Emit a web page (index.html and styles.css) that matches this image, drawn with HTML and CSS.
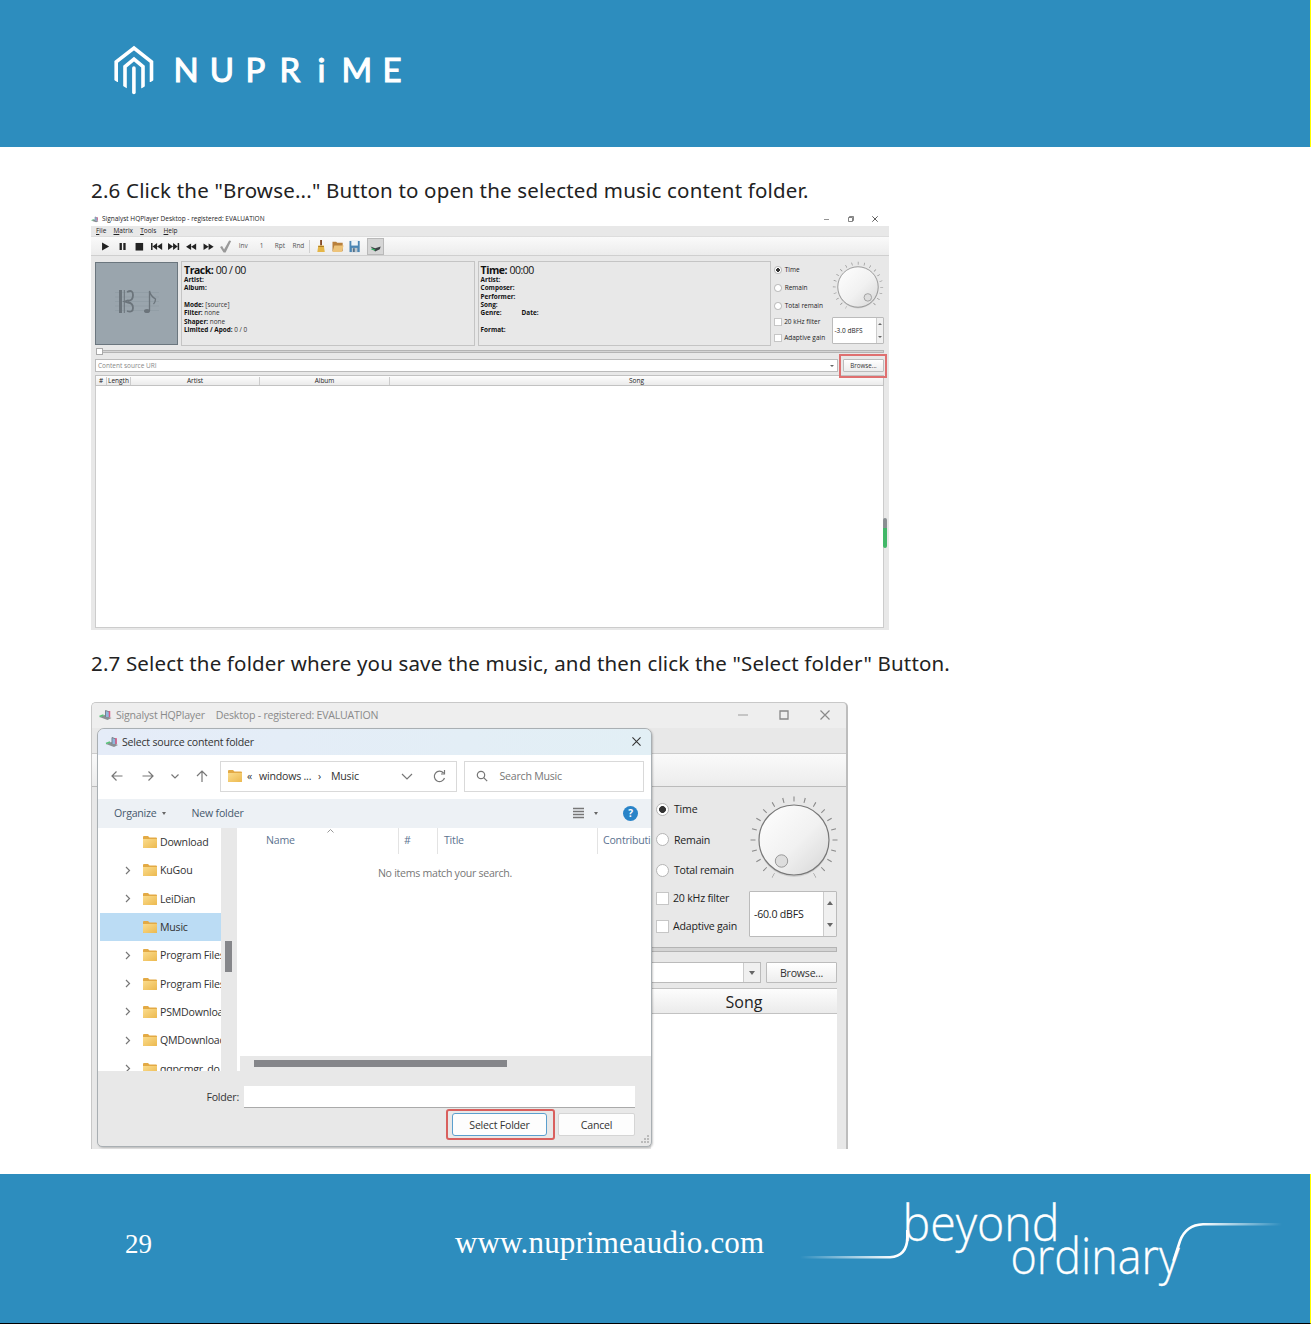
FILE: index.html
```html
<!DOCTYPE html>
<html lang="en">
<head>
    <meta charset="UTF-8">
    <meta name="viewport" content="width=device-width, initial-scale=1.0">
    <title>NuPrime - HQPlayer setup</title>
    <link rel="stylesheet" href="styles.css">
</head>
<body>
    <!-- shared icons -->
    <svg class="sprite" width="0" height="0">
        <defs>
            <linearGradient id="knob" x1="0" y1="0" x2="1" y2="1">
                <stop offset="0" stop-color="#fff"/>
                <stop offset="0.55" stop-color="#f1f1f1"/>
                <stop offset="1" stop-color="#d6d6d6"/>
            </linearGradient>
            <linearGradient id="gold" x1="0" y1="0" x2="1" y2="1">
                <stop offset="0" stop-color="#fbdc8c"/>
                <stop offset="1" stop-color="#ecb94f"/>
            </linearGradient>
        </defs>
        <symbol id="i-dial" viewBox="-45 -45 90 90">
            <path d="M-20.5 35.5A41 41 0 1 1 20.5 35.5" pathLength="20" fill="none" stroke="#8a8a8a" stroke-width="5" stroke-dasharray="0.1 0.9" stroke-dashoffset="0.05"/>
            <ellipse cx="0" cy="2" rx="35" ry="35" fill="#cfcfcf"/>
            <circle r="35" fill="url(#knob)" stroke="#777" stroke-width="1.2"/>
        </symbol>
        <symbol id="i-app" viewBox="0 0 14 12">
            <path d="M1 8l5-2 7 3-4 2z" fill="#8a8f94"/>
            <path d="M1 7.500l4-1.500" stroke="#58c478" stroke-width="1.500"/>
            <path d="M7 8V1.500l4 1.500v5" fill="#8fb7dc" stroke="#77808c"/>
            <path d="M11 2v6" stroke="#d85a86" stroke-width="1.500"/>
        </symbol>
        <symbol id="i-folder" viewBox="0 0 14 12">
            <path d="M0 1q0-1 1-1h4l1.500 1.500H13q1 0 1 1V11q0 1-1 1H1q-1 0-1-1z" fill="#e3aa45"/>
            <path d="M0 3h14v8q0 1-1 1H1q-1 0-1-1z" fill="url(#gold)"/>
        </symbol>
        <symbol id="i-chevron" viewBox="0 0 8 8">
            <path d="M2 .5L5.500 4 2 7.500" fill="none" stroke="#777" stroke-width="1.200"/>
        </symbol>
        <symbol id="i-close" viewBox="0 0 10 10">
            <path d="M.5 .5l9 9M9.500 .5l-9 9" fill="none" stroke="currentColor" stroke-width="1.200"/>
        </symbol>
    </svg>

    <header class="band top">
        <svg class="logo" width="300" height="60" viewBox="110 40 300 60">
            <g fill="none" stroke="#fff" stroke-width="3.600">
                <path d="M116.200 82V61.800L134 48l17.500 13.800V82"/>
                <path d="M125 88.500V66.500L134 59l9 7.500v22"/>
                <path d="M133.900 68V92.500" stroke-linecap="round"/>
            </g>
            <path d="M114 80l5 3v2h-5zM149 83l5-3v5h-5zM123 86l5 3v2h-5zM140.500 89l5-3v5h-5z" fill="#2d8dbe"/>
            <text class="wordmark" y="81.800" x="173.500 209.800 245.500 279.500 317.500 341.500 382.500">NUPRiME</text>
        </svg>
    </header>

    <main class="page">
        <p class="step step-a">2.6 Click the "Browse..." Button to open the selected music content folder.</p>

        <section class="player">
            <div class="titlebar">
                <svg width="8" height="7"><use href="#i-app"/></svg>
                <span class="name">Signalyst HQPlayer Desktop - registered: EVALUATION</span>
                <div class="winbtns">
                    <svg width="6" height="6"><path d="M0 3.500h5" stroke="#777" stroke-width=".8"/></svg>
                    <svg width="6" height="6"><path d="M.5 1.500h4v4h-4zM1.500 1.500v-1h4v4h-1" fill="none" stroke="#666" stroke-width=".8"/></svg>
                    <svg class="dark" width="6" height="6"><use href="#i-close"/></svg>
                </div>
            </div>
            <div class="menubar"><span><u>F</u>ile</span><span><u>M</u>atrix</span><span><u>T</u>ools</span><span><u>H</u>elp</span></div>
            <div class="toolbar">
                <svg viewBox="0 0 17 12"><path d="M5 2l7 4-7 4z"/></svg>
                <svg viewBox="0 0 17 12"><path d="M5.500 2.500h2.300v7H5.500zM9.200 2.500h2.300v7H9.200z"/></svg>
                <svg viewBox="0 0 17 12"><path d="M4.500 2.500h7.500v7.500H4.500z"/></svg>
                <svg viewBox="0 0 17 12"><path d="M3 2.500h1.500v7H3zM9 2.500v7L4.500 6zM14 2.500v7L9 6z"/></svg>
                <svg viewBox="0 0 17 12"><path d="M14 2.500h-1.500v7H14zM8 2.500v7L12.500 6zM3 2.500v7L8 6z"/></svg>
                <svg viewBox="0 0 17 12"><path d="M9 3v6.500L4 6.200zM14 3v6.500L9 6.200z"/></svg>
                <svg viewBox="0 0 17 12"><path d="M3.500 3v6.500l5-3.300zM8.500 3v6.500l5-3.300z"/></svg>
                <svg viewBox="0 0 17 12"><path d="M3 6.500L5 5.500l2 3.500 5-9 2 .5L8.500 12H6.500z" fill="#999"/></svg>
                <span>Inv</span><span>1</span><span>Rpt</span><span>Rnd</span>
                <i class="sep"></i>
                <svg viewBox="0 0 17 14"><path d="M8 0h2v6H8z" fill="#854b26"/><path d="M6 6h6l1 7H5z" fill="#e5b647"/><path d="M6 7h6" stroke="#a97822"/></svg>
                <svg viewBox="0 0 17 14"><path d="M3 2h4l1 1h6v9H3z" fill="#b9803c"/><path d="M5 6h10l-2 7H3z" fill="#edc37a"/></svg>
                <svg viewBox="0 0 17 14"><path d="M3 1h11v12H3z" fill="#4b86b4"/><path d="M5 1h7v5H5z" fill="#eef4f8"/><path d="M5.500 8.500h6V13h-6z" fill="#bcc6cd"/><path d="M7 9h1.500v4H7z" fill="#3a5c77"/></svg>
                <div class="pressed"><svg viewBox="0 0 17 14"><path d="M3 7l5 2 6-2-1 3-5 2.500z" fill="#3c4246"/><path d="M4 9.500l4 1.500" stroke="#39b566" stroke-width="1.500"/></svg></div>
            </div>
            <div class="deck">
                <div class="cover">
                    <svg width="83" height="83" viewBox="0 0 83 83">
                        <path d="M19 29.500h44M19 34h44M19 38.500h44M19 43h44M19 47.500h44" stroke="#8b979f" stroke-width=".5"/>
                        <g fill="none" stroke="#6b747b">
                            <path d="M24.500 27v23" stroke-width="3"/>
                            <path d="M28.300 27v23" stroke-width="1"/>
                            <path d="M31 29q6-3 6 3t-5 5.500l-3 1 3 1q5 .5 5 5.500t-6 3" stroke-width="1.800"/>
                            <path d="M53.500 48V28q1 5 6 8 0 3-2 5" stroke-width="1.300"/>
                        </g>
                        <ellipse cx="51" cy="48" rx="3" ry="2" fill="#6b747b"/>
                    </svg>
                </div>
                <div class="info">
                    <h3><b>Track:</b> 00 / 00</h3>
                    <p><b>Artist:</b></p>
                    <p><b>Album:</b></p>
                    <p>&nbsp;</p>
                    <p><b>Mode:</b> [source]</p>
                    <p><b>Filter:</b> none</p>
                    <p><b>Shaper:</b> none</p>
                    <p><b>Limited / Apod:</b> 0 / 0</p>
                </div>
                <div class="info">
                    <h3><b>Time:</b> 00:00</h3>
                    <p><b>Artist:</b></p>
                    <p><b>Composer:</b></p>
                    <p><b>Performer:</b></p>
                    <p><b>Song:</b></p>
                    <p class="pair"><b>Genre:</b><b>Date:</b></p>
                    <p>&nbsp;</p>
                    <p><b>Format:</b></p>
                </div>
                <div class="options">
                    <label><i class="radio on"></i>Time</label>
                    <label><i class="radio"></i>Remain</label>
                    <label><i class="radio"></i>Total remain</label>
                    <label class="tight"><i class="check"></i>20 kHz filter</label>
                    <label class="tight"><i class="check"></i>Adaptive gain</label>
                </div>
                <div class="volume">
                    <svg width="52" height="52" viewBox="-45 -45 90 90">
                        <use href="#i-dial" x="-45" y="-45" width="90" height="90"/>
                        <circle cx="17" cy="18" r="6.500" fill="#ddd" stroke="#999" stroke-width="1.500"/>
                    </svg>
                    <div class="spin"><span>-3.0 dBFS</span><div class="arrows"><i class="up"></i><i class="down"></i></div></div>
                </div>
            </div>
            <div class="seek"><i></i></div>
            <div class="source">
                <div class="combo"><span>Content source URI</span><i class="down"></i></div>
                <div class="mark"><button>Browse...</button></div>
            </div>
            <div class="cols"><span>#</span><span>Length</span><span>Artist</span><span>Album</span><span>Song</span></div>
            <div class="tracks"><i class="meter"></i></div>
        </section>

        <p class="step step-b">2.7 Select the folder where you save the music, and then click the "Select folder" Button.</p>

        <section class="player big">
            <div class="titlebar">
                <svg width="15" height="12"><use href="#i-app"/></svg>
                <span class="name">Signalyst HQPlayer</span>
                <span>Desktop - registered: EVALUATION</span>
                <div class="winbtns">
                    <svg width="10" height="10"><path d="M0 5h10" stroke="#aaa" stroke-width="1.200"/></svg>
                    <svg width="10" height="10"><path d="M1 1h8v8H1z" fill="none" stroke="#888" stroke-width="1.300"/></svg>
                    <svg width="10" height="10"><use href="#i-close"/></svg>
                </div>
            </div>
            <div class="menubar"></div>
            <div class="toolbar"></div>
            <div class="right">
                <div class="deck">
                    <div class="options">
                        <label><i class="radio on"></i>Time</label>
                        <label><i class="radio"></i>Remain</label>
                        <label><i class="radio"></i>Total remain</label>
                        <label class="tight"><i class="check"></i>20 kHz filter</label>
                        <label class="tight"><i class="check"></i>Adaptive gain</label>
                    </div>
                    <div class="volume">
                        <svg width="90" height="90" viewBox="-45 -45 90 90">
                            <use href="#i-dial" x="-45" y="-45" width="90" height="90"/>
                            <circle cx="-12.500" cy="21" r="6.200" fill="#ddd" stroke="#999"/>
                        </svg>
                        <div class="spin"><span>-60.0 dBFS</span><div class="arrows"><i class="up"></i><i class="down"></i></div></div>
                    </div>
                </div>
                <div class="seek"></div>
                <div class="source">
                    <div class="combo"><span></span><div class="open"><i class="down"></i></div></div>
                    <button>Browse...</button>
                </div>
                <div class="cols"><span>Song</span></div>
                <div class="tracks"></div>
            </div>

            <div class="dialog">
                <div class="dlg-title">
                    <svg width="14" height="12"><use href="#i-app"/></svg>
                    <span>Select source content folder</span>
                    <svg class="x" width="9" height="9"><use href="#i-close"/></svg>
                </div>
                <div class="dlg-nav">
                    <svg width="12" height="12" viewBox="0 0 12 12"><path d="M11.500 6H1M5.500 1.500L1 6l4.500 4.500"/></svg>
                    <svg width="12" height="12" viewBox="0 0 12 12"><path d="M.5 6H11M6.500 1.500L11 6l-4.500 4.500"/></svg>
                    <svg width="12" height="12" viewBox="0 0 12 12"><path d="M2.500 4.500L6 8l3.500-3.500"/></svg>
                    <svg width="12" height="12" viewBox="0 0 12 12"><path d="M6 12V1M1 6l5-5 5 5"/></svg>
                    <div class="address">
                        <svg width="14" height="12"><use href="#i-folder"/></svg>
                        <span class="laquo">«</span>
                        <span class="crumb">windows ...</span>
                        <span class="gt">›</span>
                        <span>Music</span>
                        <svg class="drop" width="12" height="12" viewBox="0 0 12 12"><path d="M1 4l5 5 5-5"/></svg>
                        <svg width="13" height="13" viewBox="0 0 13 13"><path d="M11.500 8A5.200 5.200 0 1 1 10.500 3M11.500 0v4H8"/></svg>
                    </div>
                    <div class="search">
                        <svg width="12" height="12" viewBox="0 0 12 12"><circle cx="5" cy="5" r="3.700"/><path d="M7.700 7.700l3.500 3.500"/></svg>
                        <span>Search Music</span>
                    </div>
                </div>
                <div class="dlg-tools">
                    <span>Organize</span><i class="down"></i><span class="new">New folder</span>
                    <svg class="lines" width="11" height="12"><path d="M0 1.500h11M0 4.500h11M0 7.500h11M0 10.500h11" stroke="#777" stroke-width="1.300"/></svg>
                    <i class="down"></i>
                    <b class="help">?</b>
                </div>
                <div class="dlg-body">
                    <ul class="tree">
                        <li><svg class="chev"></svg><svg class="fold"><use href="#i-folder"/></svg>Download</li>
                        <li><svg class="chev"><use href="#i-chevron"/></svg><svg class="fold"><use href="#i-folder"/></svg>KuGou</li>
                        <li><svg class="chev"><use href="#i-chevron"/></svg><svg class="fold"><use href="#i-folder"/></svg>LeiDian</li>
                        <li class="sel"><svg class="chev"></svg><svg class="fold"><use href="#i-folder"/></svg>Music</li>
                        <li><svg class="chev"><use href="#i-chevron"/></svg><svg class="fold"><use href="#i-folder"/></svg>Program Files</li>
                        <li><svg class="chev"><use href="#i-chevron"/></svg><svg class="fold"><use href="#i-folder"/></svg>Program Files</li>
                        <li><svg class="chev"><use href="#i-chevron"/></svg><svg class="fold"><use href="#i-folder"/></svg>PSMDownload</li>
                        <li><svg class="chev"><use href="#i-chevron"/></svg><svg class="fold"><use href="#i-folder"/></svg>QMDownload</li>
                        <li><svg class="chev"><use href="#i-chevron"/></svg><svg class="fold"><use href="#i-folder"/></svg>qqpcmgr_do</li>
                    </ul>
                    <div class="vscroll"><i></i></div>
                    <div class="files">
                        <div class="filecols">
                            <span>Name<svg width="7" height="4"><path d="M.5 3.500l3-3 3 3" fill="none" stroke="#999"/></svg></span>
                            <span>#</span><span>Title</span><span>Contributing</span>
                        </div>
                        <p>No items match your search.</p>
                        <div class="hscroll"><i></i></div>
                    </div>
                </div>
                <div class="dlg-folder"><label>Folder:</label><div class="field"></div></div>
                <div class="dlg-actions">
                    <div class="mark"><button class="primary">Select Folder</button></div>
                    <button>Cancel</button>
                    <svg class="grip" width="8" height="8"><path d="M6 0h2v2H6zM3 3h2v2H3zM6 3h2v2H6zM0 6h2v2H0zM3 6h2v2H3zM6 6h2v2H6z" fill="#bbb"/></svg>
                </div>
            </div>
        </section>
    </main>

    <footer class="band bottom">
        <span class="num">29</span>
        <span class="site">www.nuprimeaudio.com</span>
        <svg class="tagline" width="490" height="100" viewBox="795 1195 490 100">
            <defs>
                <linearGradient id="fadeL" gradientUnits="userSpaceOnUse" x1="800" y1="0" x2="895" y2="0">
                    <stop offset="0" stop-color="#fff" stop-opacity="0"/>
                    <stop offset="1" stop-color="#fff"/>
                </linearGradient>
                <linearGradient id="fadeR" gradientUnits="userSpaceOnUse" x1="1200" y1="0" x2="1282" y2="0">
                    <stop offset="0" stop-color="#fff"/>
                    <stop offset="1" stop-color="#fff" stop-opacity="0"/>
                </linearGradient>
            </defs>
            <path d="M800 1257.200H890Q907 1256 907.300 1238V1230" fill="none" stroke="url(#fadeL)" stroke-width="2.600"/>
            <path d="M1173.500 1261L1180 1241Q1186 1225 1203 1224.300H1282" fill="none" stroke="url(#fadeR)" stroke-width="2.600"/>
            <text x="902.500" y="1241" textLength="157" lengthAdjust="spacingAndGlyphs">beyond</text>
            <text x="1010.500" y="1274" textLength="169" lengthAdjust="spacingAndGlyphs">ordinary</text>
        </svg>
    </footer>
</body>
</html>
```
FILE: styles.css
```css
*, *::after {
    box-sizing: border-box;
}
body {
    margin: 0;
    width: 1311px;
    height: 1324px;
    background-color: #ffffff;
    font-family: "Open Sans", "Noto Sans", sans-serif;
    color: #222222;
    display: flex;
    flex-direction: column;
    overflow: hidden;
}
p, h3, ul {
    margin: 0;
    padding: 0;
}
svg {
    display: block;
    flex: none;
}
.sprite {
    position: absolute;
}
button {
    font-family: inherit;
    letter-spacing: inherit;
    padding: 0;
    color: #333333;
}

/* page bands */
.band {
    background-color: #2d8dbe;
    border-right: 1px solid #ffff00;
    color: #ffffff;
    flex: none;
}
.top {
    height: 147px;
    padding: 40px 0 0 110px;
}
.wordmark {
    font-family: Lato, sans-serif;
    font-size: 33px;
    fill: #ffffff;
    stroke: #ffffff;
    stroke-width: 1.1px;
}
.bottom {
    height: 150px;
    border-bottom: 1px solid #000000;
    display: flex;
    padding-left: 125px;
    font-family: "Liberation Serif", serif;
    line-height: 36px;
}
.num {
    width: 330px;
    padding-top: 52px;
    font-size: 27px;
}
.site {
    width: 340px;
    padding-top: 51px;
    font-size: 31px;
    letter-spacing: 0.15px;
}
.tagline {
    margin-top: 21px;
}
.tagline text {
    font-family: "Open Sans", sans-serif;
    font-weight: 300;
    font-size: 49px;
    fill: #ffffff;
    stroke: #ffffff;
    stroke-width: 0.3px;
}
.page {
    height: 1027px;
    padding: 29px 0 0 91px;
}
.step {
    font-family: "Noto Sans", sans-serif;
    font-size: 20.5px;
    letter-spacing: 0.18px;
    line-height: 28px;
    height: 28px;
    white-space: nowrap;
}
.step-a {
    margin-bottom: 8px;
}
.step-b {
    margin: 19px 0 25px;
    letter-spacing: 0.16px;
}

/* player window */
.player {
    width: 798px;
    height: 418px;
    background-color: #e8e8e8;
    display: flex;
    flex-direction: column;
    position: relative;
    font-size: 6.5px;
    line-height: 8px;
    white-space: nowrap;
}
.player .titlebar {
    height: 14px;
    background-color: #ffffff;
    display: flex;
    align-items: center;
    gap: 3px;
}
.winbtns {
    margin-left: auto;
    display: flex;
    gap: 18px;
    padding-right: 11px;
}
.menubar {
    height: 10px;
    padding-left: 5px;
    display: flex;
    gap: 7.2px;
    align-items: center;
}
.toolbar {
    height: 20px;
    border-top: 1px solid #dddddd;
    border-bottom: 1px solid #cfcfcf;
    background: linear-gradient(#fafafa, #ececec);
    display: flex;
    align-items: center;
    padding-left: 5.5px;
    color: #555555;
}
.toolbar svg {
    width: 17.2px;
    height: 13px;
    fill: #222222;
}
.toolbar span {
    width: 18.4px;
    text-align: center;
}
.toolbar .sep {
    width: 1px;
    height: 13px;
    margin: 0 2px 0 1px;
    background-color: #d0d0d0;
}
.pressed {
    width: 17px;
    height: 17px;
    margin-left: 4px;
    background-color: #d6d6d6;
    border: 1px solid #b9b9b9;
    display: flex;
    justify-content: center;
    align-items: center;
}
.deck {
    display: flex;
    height: 85px;
    margin: 5px 5px 0 4px;
}
.cover {
    width: 83px;
    height: 83px;
    margin-top: 1px;
    background-color: #9aa5ad;
    border: 1px solid #6b767e;
}
.info {
    width: 294px;
    margin-left: 3px;
    border: 1px solid #c4c4c4;
    padding: 3px 0 0 2px;
    line-height: 8.35px;
    color: #333333;
}
.info h3 {
    font-size: 10.5px;
    font-weight: 400;
    line-height: 10.5px;
    height: 11px;
    letter-spacing: -0.45px;
    color: #111111;
}
.info b {
    font-weight: 700;
    color: #111111;
}
.info p {
    font-size: 6.4px;
}
.pair b {
    display: inline-block;
    width: 41px;
}
.options {
    width: 57px;
    margin-left: 3px;
}
.options label {
    height: 18px;
    display: flex;
    align-items: center;
    gap: 3px;
}
.options .tight {
    height: 16.5px;
    gap: 2px;
    position: relative;
    top: -1.5px;
}
.radio {
    width: 7.5px;
    height: 7.5px;
    border: 1px solid #b5b5b5;
    border-radius: 50%;
    background-color: #ffffff;
}
.radio.on {
    background: radial-gradient(circle, #333 40%, #fff 48%);
}
.check {
    width: 8px;
    height: 8px;
    border: 1px solid #c6c6c6;
    background-color: #ffffff;
}
.volume {
    width: 53px;
    display: flex;
    flex-direction: column;
    align-items: center;
}
.spin {
    width: 52px;
    height: 27px;
    margin-top: 4px;
    background-color: #ffffff;
    border: 1px solid #bbbbbb;
    border-radius: 1px;
    display: flex;
    justify-content: space-between;
    align-items: center;
    padding-left: 2px;
}
.arrows {
    width: 7px;
    height: 100%;
    background-color: #f0f0f0;
    border-left: 1px solid #cccccc;
    display: flex;
    flex-direction: column;
    justify-content: space-around;
    align-items: center;
}
.up, .down {
    border: 2px solid transparent;
    border-bottom: 2.5px solid #666666;
    border-top: 0;
}
.down {
    border-top: 2.5px solid #666666;
    border-bottom: 0;
}
.seek {
    height: 3px;
    margin: 4px 5px 0 6px;
    background-color: #d4d4d4;
    border: 1px solid #b4b4b4;
    display: flex;
    align-items: center;
}
.seek i {
    width: 7px;
    height: 7px;
    flex: none;
    margin-left: -2px;
    background-color: #ffffff;
    border: 1px solid #aaaaaa;
}
.source {
    display: flex;
    margin: 6px 5px 0 4px;
}
.combo {
    flex: 1;
    height: 13px;
    background-color: #ffffff;
    border: 1px solid #bbbbbb;
    display: flex;
    justify-content: space-between;
    align-items: center;
    padding: 0 3px 0 2px;
    color: #888888;
}
.player button {
    display: block;
    width: 41px;
    height: 13px;
    margin-left: 5px;
    font-size: 6.2px;
    line-height: 8px;
    border: 1px solid #bcbcbc;
    border-radius: 1px;
    background: linear-gradient(#ffffff, #ededed);
}
.mark {
    position: relative;
}
.mark::after {
    content: "";
    position: absolute;
    left: 1px;
    right: -3px;
    top: -5px;
    height: 24px;
    border: 2px solid #df7070;
}
.cols {
    height: 11px;
    margin: 3px 5px 0 4px;
    display: flex;
    align-items: center;
    text-align: center;
    background: linear-gradient(#fdfdfd, #ebebeb);
    border: 1px solid #c2c2c2;
}
.cols span {
    border-right: 1px solid #cccccc;
}
.cols span:nth-child(1) { width: 11px; }
.cols span:nth-child(2) { width: 24px; }
.cols span:nth-child(3) { width: 129px; }
.cols span:nth-child(4) { width: 130px; }
.cols span:last-child { flex: 1; border: 0; }
.player .tracks {
    flex: 1;
    margin: 0 5px 2px 4px;
    background-color: #ffffff;
    border: 1px solid #cccccc;
    border-top: 0;
    position: relative;
}
.meter {
    position: absolute;
    right: -4px;
    top: 132px;
    width: 4px;
    height: 30px;
    border-radius: 2px;
    background: linear-gradient(#8a8f92 33%, #42b768 34%);
}

/* second, enlarged window */
.big {
    width: 757px;
    height: 447px;
    font-size: 10.6px;
    letter-spacing: -0.22px;
    line-height: 14px;
    border: 1px solid #c8c8c8;
    border-right: 2px solid #bdbdbd;
    border-bottom: 0;
    border-radius: 5px 5px 0 0;
}
.big .titlebar {
    height: 25px;
    padding: 0 0 1px 6px;
    background-color: #eeeeee;
    border-radius: 4px 4px 0 0;
    color: #8a8a8a;
}
.big .name {
    margin-right: 8px;
}
.big .winbtns {
    gap: 31px;
    padding-right: 16px;
}
.big .menubar {
    height: 25px;
}
.big .toolbar {
    height: 34px;
    border-top: 1px solid #cccccc;
    border-bottom: 1.5px solid #bbbbbb;
}
.right {
    flex: 1;
    margin-left: 559px;
    margin-right: 9px;
    display: flex;
    flex-direction: column;
}
.big .deck {
    height: 151px;
    margin: 7px 0 0 6px;
}
.big .options {
    width: 93px;
    margin: 0 0 0 -1px;
}
.big .options label {
    height: 30.5px;
    gap: 5px;
}
.big .options .tight {
    height: 28px;
    gap: 4px;
}
.big .radio, .big .check {
    width: 13px;
    height: 13px;
}
.big .volume {
    width: 88px;
    margin-left: 1px;
}
.big .volume svg {
    margin: 1px 0 0 1px;
}
.big .spin {
    width: 88px;
    height: 46px;
    margin-top: 6px;
    padding-left: 4px;
    flex: none;
}
.big .arrows {
    width: 13px;
}
.big .up, .big .down {
    border-left-width: 3.5px;
    border-right-width: 3.5px;
}
.big .up {
    border-bottom-width: 4px;
}
.big .down {
    border-top-width: 4px;
}
.big .seek {
    height: 5px;
    margin: 2px 0 0;
}
.big .source {
    margin: 10px 0 0;
}
.big .combo {
    height: 21px;
    padding-right: 0;
}
.open {
    width: 17px;
    height: 100%;
    background-color: #f0f0f0;
    border-left: 1px solid #cccccc;
    display: flex;
    justify-content: center;
    align-items: center;
}
.big button {
    width: 71px;
    height: 21px;
    font-size: 10.6px;
    line-height: 14px;
}
.big .cols {
    height: 26px;
    margin: 5px 0 0;
    padding-top: 2px;
    font-size: 16px;
    letter-spacing: 0;
    line-height: 20px;
    border-left: 0;
    border-right: 0;
}
.big .tracks {
    margin: 0;
    border: 0;
}
.dialog {
    position: absolute;
    left: 5px;
    top: 25px;
    width: 555px;
    height: 419px;
    background-color: #e8e8e8;
    border: 1px solid #a9afb3;
    border-radius: 7px 7px 5px 5px;
    box-shadow: 1px 1px 2px rgba(0, 0, 0, 0.2);
    overflow: hidden;
    display: flex;
    flex-direction: column;
    color: #333333;
}
.dlg-title {
    height: 26px;
    flex: none;
    display: flex;
    align-items: center;
    gap: 3px;
    padding: 0 10px 1px 7px;
    background: linear-gradient(90deg, #e5ecf8, #e2eff5);
}
.dlg-title .x {
    margin-left: auto;
}
.dlg-nav {
    height: 44px;
    flex: none;
    padding: 0 7px 2px 13px;
    display: flex;
    align-items: center;
    background-color: #ffffff;
}
.dlg-nav > svg {
    margin-right: 19px;
}
.dlg-nav > svg:nth-child(2), .dlg-nav > svg:nth-child(3) {
    margin-right: 15px;
}
.dlg-nav svg:not(:has(use)) {
    fill: none;
    stroke: #777777;
    stroke-width: 1.2px;
}
.address, .search {
    height: 31px;
    border: 1px solid #d9d9d9;
    display: flex;
    align-items: center;
}
.address {
    width: 238px;
    margin-left: -7px;
    padding: 0 10px 0 7px;
}
.laquo {
    margin: 0 7px 0 5px;
}
.crumb {
    width: 54px;
}
.gt {
    width: 18px;
    padding-left: 5px;
}
.drop {
    margin: 0 20px 0 auto;
}
.search {
    width: 180px;
    margin-left: 7px;
    padding-left: 11px;
    gap: 11px;
    color: #777777;
}
.dlg-tools {
    height: 29px;
    flex: none;
    display: flex;
    align-items: center;
    gap: 5px;
    padding: 0 13px 1px 16px;
    background-color: #edf1f5;
    color: #47596d;
}
.dlg-tools .down {
    border-width: 3px 2.5px 0;
}
.new {
    margin-left: 21px;
}
.lines {
    margin-left: auto;
    margin-right: 5px;
}
.help {
    width: 15px;
    height: 15px;
    margin-left: 20px;
    border-radius: 50%;
    background-color: #2a84c8;
    color: #ffffff;
    font-size: 10px;
    text-align: center;
}
.dlg-body {
    height: 243px;
    flex: none;
    display: flex;
    background-color: #ffffff;
}
.tree {
    width: 123px;
    list-style: none;
    overflow: hidden;
    padding: 0 0 0 2px;
}
.tree li {
    height: 28.3px;
    display: flex;
    align-items: center;
    padding-left: 24px;
    gap: 3px;
}
.tree .sel {
    background-color: #bbdcf4;
}
.chev {
    width: 8px;
    height: 9px;
    margin-right: 8px;
}
.fold {
    width: 14px;
    height: 12px;
}
.vscroll {
    width: 16px;
    background-color: #e8e8e8;
    padding: 113px 0 0 4px;
}
.vscroll i {
    display: block;
    width: 7px;
    height: 31px;
    background-color: #85868a;
}
.files {
    flex: 1;
    overflow: hidden;
    display: flex;
    flex-direction: column;
    color: #777777;
}
.filecols {
    height: 26px;
    display: flex;
    line-height: 25px;
    color: #5c7390;
}
.filecols span {
    border-right: 1px solid #e3e3e3;
    padding-left: 5px;
    flex: none;
}
.filecols span:nth-child(1) { width: 162px; padding-left: 29px; display: flex; }
.filecols span:nth-child(2) { width: 39px; }
.filecols span:nth-child(3) { width: 160px; padding-left: 6px; }
.filecols svg {
    margin: 1px 0 0 32px;
}
.files p {
    text-align: center;
    padding: 12px 0 0 2px;
    letter-spacing: -0.28px;
}
.hscroll {
    margin: auto 0 0 3px;
    height: 15px;
    background-color: #e8e8e8;
    padding: 4px 0 0 14px;
}
.hscroll i {
    display: block;
    width: 253px;
    height: 7px;
    background-color: #85868a;
}
.dlg-folder {
    display: flex;
    align-items: center;
    margin: 15px 16px 0 0;
    height: 22px;
    flex: none;
}
.dlg-folder label {
    width: 146px;
    padding-right: 5px;
    text-align: right;
}
.field {
    flex: 1;
    height: 22px;
    background-color: #ffffff;
    border-bottom: 1px solid #aaaaaa;
}
.dlg-actions {
    display: flex;
    justify-content: flex-end;
    gap: 11px;
    padding: 5px 16px 0 0;
    position: relative;
}
.dlg-actions button {
    width: 77px;
    height: 23px;
    margin: 0;
    background: #fdfdfd;
    border: 1px solid #d5d5d5;
    border-radius: 2px;
}
.dlg-actions .primary {
    width: 95px;
    height: 23px;
    border: 1.5px solid #5b9fce;
    border-radius: 3px;
}
.dlg-actions .mark::after {
    left: -6px;
    right: -8px;
    top: -4px;
    height: 31px;
    border: 2px solid #d9605e;
    border-radius: 3px;
}
.grip {
    position: absolute;
    right: 2px;
    bottom: -7px;
}
```
